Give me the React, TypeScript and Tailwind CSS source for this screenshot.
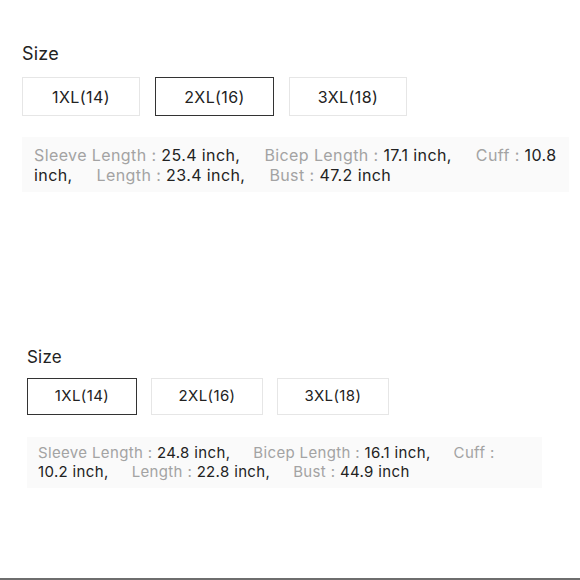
import React from "react";

type Item = { label: string; value: string };

const top: Item[] = [
  { label: "Sleeve Length", value: "25.4 inch," },
  { label: "Bicep Length", value: "17.1 inch," },
  { label: "Cuff", value: "10.8 inch," },
  { label: "Length", value: "23.4 inch," },
  { label: "Bust", value: "47.2 inch" },
];

const bottom: Item[] = [
  { label: "Sleeve Length", value: "24.8 inch," },
  { label: "Bicep Length", value: "16.1 inch," },
  { label: "Cuff", value: "10.2 inch," },
  { label: "Length", value: "22.8 inch," },
  { label: "Bust", value: "44.9 inch" },
];

const sizes = ["1XL(14)", "2XL(16)", "3XL(18)"];

export default function App() {
  return (
    <div
      className="w-[580px] h-[580px] bg-white flex flex-col overflow-hidden"
      style={{ fontFamily: "Inter, 'Liberation Sans', sans-serif" }}
    >
      {/* Section 1 */}
      <div className="pl-[22px] pt-[42px] w-[569px]">
        <div className="text-[18px] leading-[24px] tracking-[0.2px] text-[#222]">Size</div>
        <div className="flex gap-[15px] mt-[11px]">
          {sizes.map((s, i) => (
            <div
              key={s}
              className={
                i === 1
                  ? "w-[119px] h-[39px] flex items-center justify-center border border-[#333] text-[16px] tracking-[0.4px] text-[#222]"
                  : "w-[118px] h-[39px] flex items-center justify-center border border-[#e6e6e6] text-[16px] tracking-[0.4px] text-[#222]"
              }
            >
              {s}
            </div>
          ))}
        </div>
        <div className="mt-[21px] bg-[#fafafa] h-[55px] pl-[12px] pr-[8px] pt-[8px] text-[16px] tracking-[0.4px] leading-[20px]">
          {top.map((it, i) => (
            <span key={i} className="mr-[24px]">
              <span className="text-[#a3a3a3]">{it.label} : </span>
              <span className="text-[#222]">{it.value}</span>
            </span>
          ))}
        </div>
      </div>

      {/* Section 2 */}
      <div className="pl-[27px] pt-[154px] w-[542px]">
        <div className="text-[17px] leading-[22px] tracking-[0.2px] text-[#222]">Size</div>
        <div className="flex gap-[14px] mt-[10px]">
          {sizes.map((s, i) => (
            <div
              key={s}
              className={
                i === 0
                  ? "w-[110px] h-[37px] flex items-center justify-center border border-[#333] text-[15px] tracking-[0.4px] text-[#222]"
                  : "w-[112px] h-[37px] flex items-center justify-center border border-[#e6e6e6] text-[15px] tracking-[0.4px] text-[#222]"
              }
            >
              {s}
            </div>
          ))}
        </div>
        <div className="mt-[22px] bg-[#fafafa] h-[51px] pl-[11px] pr-[20px] pt-[6px] text-[15px] tracking-[0.35px] leading-[19px] w-[515px]">
          {bottom.map((it, i) => (
            <span key={i} className="mr-[23px]">
              <span className="text-[#a3a3a3]">{it.label} : </span>
              <span className="text-[#222]">{it.value}</span>
            </span>
          ))}
        </div>
      </div>

      <div className="flex-1" />
      <div className="h-[2px] bg-[#6e6e6e]" />
    </div>
  );
}
